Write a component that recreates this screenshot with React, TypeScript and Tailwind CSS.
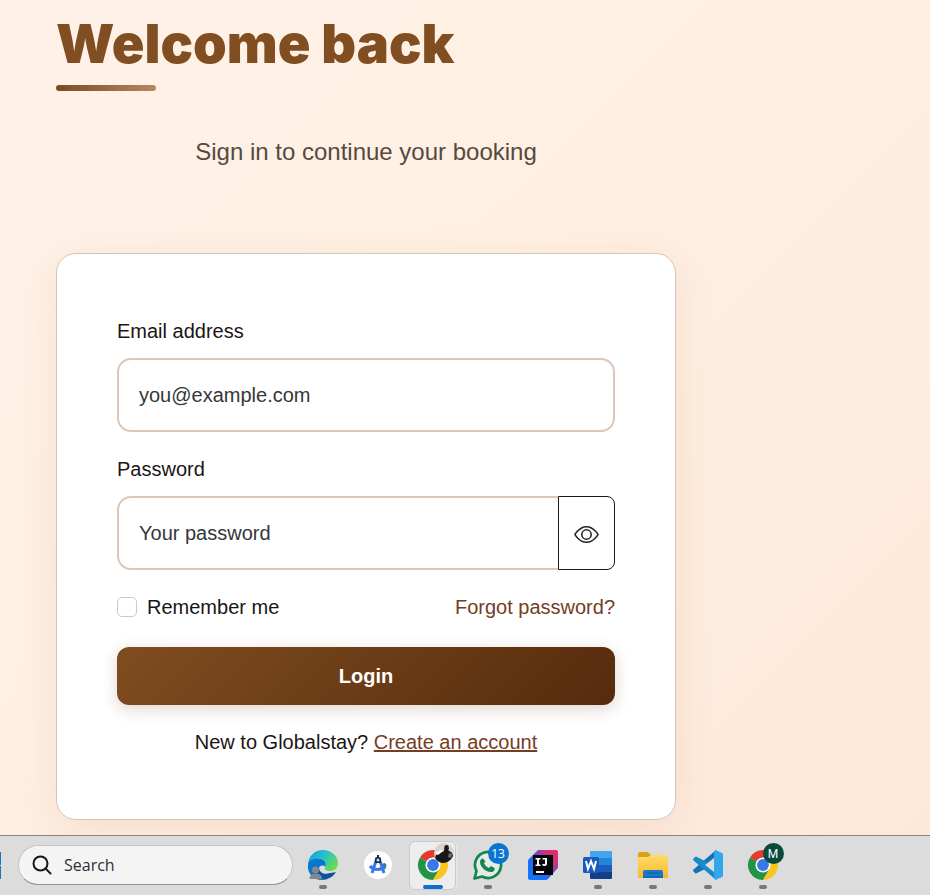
import { useState, type ReactNode } from "react";

function EyeIcon() {
  return (
    <svg viewBox="0 0 16 16" className="h-[25px] w-[25px]" fill="#212529" aria-hidden="true">
      <path d="M16 8s-3-5.500-8-5.500S0 8 0 8s3 5.500 8 5.500S16 8 16 8M1.173 8a13 13 0 0 1 1.660-2.043C4.120 4.668 5.880 3.500 8 3.500s3.879 1.168 5.168 2.457A13 13 0 0 1 14.828 8q-.086.130-.195.288c-.335.480-.830 1.120-1.465 1.755C11.879 11.332 10.119 12.500 8 12.500s-3.879-1.168-5.168-2.457A13 13 0 0 1 1.172 8z" />
      <path d="M8 5.500a2.500 2.500 0 1 0 0 5 2.500 2.500 0 0 0 0-5M4.500 8a3.500 3.500 0 1 1 7 0 3.500 3.500 0 0 1-7 0" />
    </svg>
  );
}

function EdgeIcon() {
  return (
    <svg viewBox="0 0 32 32" className="h-8 w-8" aria-hidden="true">
      <defs>
        <linearGradient id="edgeTop" x1="0" y1="0" x2="1" y2="0.6">
          <stop offset="0" stopColor="#1597dc" />
          <stop offset="0.5" stopColor="#27bfd0" />
          <stop offset="1" stopColor="#67dc55" />
        </linearGradient>
      </defs>
      <path d="M1 16C1 7 8 1 16 1s15 6 15 13c0 5-3.500 8-8 8-4 0-6-2-5-3 2-3-1-6-5-6C7 12 2 15 1 16z" fill="url(#edgeTop)" />
      <path d="M1 16c1-5 6-7 11-6 5 0 8 4 6 8-1-2-5-2-6 1-1 5 3 10 9 11C9 34 0 26 1 16z" fill="#0876cf" />
      <path d="M12 18c0 6 5 8 11 6 3 0 5-1 6-1-3 5-8 8-14 7-4-2-6-8-3-12z" fill="#124f9b" />
      <circle cx="8.500" cy="21" r="3.600" fill="#85888b" />
      <path d="M2.500 30c0-3 1.500-5 4-5h4.500c2.500 0 4 2 4 5z" fill="#85888b" />
    </svg>
  );
}

function AndroidStudioIcon() {
  return (
    <svg viewBox="0 0 30 30" className="h-[30px] w-[30px]" aria-hidden="true">
      <circle cx="15" cy="15" r="14" fill="#fff" />
      <path d="m18 14 4-1 1.500 2-1 4-3 1z" fill="#26885c" />
      <path d="M14 8 9 23M16 8l5 15M7 16c3 4 11 5 15 0" fill="none" stroke="#3978e8" strokeWidth="3" />
      <path d="M14 5h2v2l2 1v5h-6V8l2-1z" fill="#172d4b" />
      <circle cx="15" cy="10" r="1.500" fill="#bcdcff" />
    </svg>
  );
}

function ChromeIcon() {
  return (
    <svg viewBox="0 0 32 32" className="h-8 w-8" aria-hidden="true">
      <path d="M16 16 3 8.500A15 15 0 0 1 29 8.500H16z" fill="#e33b2e" />
      <path d="M16 16 3 8.500a15 15 0 0 0 13 22.500l6.500-11z" fill="#219447" />
      <path d="M16 16v-7.500h13A15 15 0 0 1 16 31l6.500-11z" fill="#fbc51b" />
      <circle cx="16" cy="16" r="7.600" fill="#fff" />
      <circle cx="16" cy="16" r="5.900" fill="#3979e6" />
    </svg>
  );
}

function ProfilePhoto() {
  return (
    <svg viewBox="0 0 20 20" className="h-5 w-5" aria-hidden="true">
      <circle cx="10" cy="10" r="10" fill="#d9d3cc" />
      <path d="M10.500 3q2.500-2 4 0l.5 3-1 1 4 3 1 3q-3 6-9 7-6 0-9-5l1-3 8-4z" fill="#17181a" />
      <path d="m1 10 6-3 2 1-5 4z" fill="#fff" />
      <path d="m15 10 3 1-1 4-3-1z" fill="#77736e" />
    </svg>
  );
}

function WhatsAppIcon() {
  return (
    <svg viewBox="0 0 32 32" className="h-8 w-8" aria-hidden="true">
      <path d="m2.500 29.500 2-7.500A13 13 0 1 1 10 27.500z" fill="#e7ebe8" stroke="#168451" strokeWidth="2.700" strokeLinejoin="round" />
      <path d="M11 9.500c-1-.5-3 1-3 3.500 0 5 6 10 11 10 3 0 4-2 3.500-4L19 17l-2 2c-2-.5-4.500-3-5-5l1.500-1.500z" fill="#168451" />
    </svg>
  );
}

function IntelliJIcon() {
  return (
    <svg viewBox="0 0 32 32" className="h-8 w-8" aria-hidden="true">
      <defs>
        <linearGradient id="ijEdge" x1="1" y1="0" x2="0" y2="1">
          <stop offset="0" stopColor="#ff235c" />
          <stop offset="0.3" stopColor="#b8358f" />
          <stop offset="0.55" stopColor="#2864ee" />
          <stop offset="1" stopColor="#087cff" />
        </linearGradient>
      </defs>
      <path d="M11 1h18q2 0 2 2v15q0 2-2 3L21 30q-1 1-3 1H3q-2 0-2-2V12q0-2 2-3z" fill="url(#ijEdge)" />
      <path d="M6 6h20v20H6z" fill="#050507" />
      <path d="M8.500 9h5v1.500h-1.500v5h1.500V17h-5v-1.500H10v-5H8.500zM15.500 9h4.500v6q0 2-2.500 2-1.500 0-2.500-1l1-1.200q2 1 2-.3v-4h-2.500zM9 22h8v2H9z" fill="#fff" />
    </svg>
  );
}

function WordIcon() {
  return (
    <svg viewBox="0 0 32 32" className="h-8 w-8" aria-hidden="true">
      <path d="M8 3q0-1 1-1h20q1 0 1 1v7H8z" fill="#43a5ed" />
      <path d="M8 9h22v7H8z" fill="#2785d7" />
      <path d="M8 16h22v7H8z" fill="#1c5ebb" />
      <path d="M8 23h22v6q0 1-1 1H9q-1 0-1-1z" fill="#143f86" />
      <rect x="1" y="8" width="16" height="16" rx="1.500" fill="#185abd" />
      <path d="m4 12 2 8 3-8 3 8 2-8" fill="none" stroke="#fff" strokeWidth="2" />
    </svg>
  );
}

function FolderIcon() {
  return (
    <svg viewBox="0 0 32 32" className="h-8 w-8" aria-hidden="true">
      <defs>
        <linearGradient id="folderFront" x1="0" y1="0" x2="0" y2="1">
          <stop offset="0" stopColor="#ffdc67" />
          <stop offset="1" stopColor="#f6b92b" />
        </linearGradient>
      </defs>
      <path d="M1 5q0-2 2-2h8l3 3h15v9H1z" fill="#dba219" />
      <path d="M1 8h10l3-2h15q2 0 2 2v21H1z" fill="url(#folderFront)" />
      <path d="M6 29v-6q0-2 2-2h16q2 0 2 2v6z" fill="#1878cb" />
      <path d="M10 24h12M6 28h20" fill="none" stroke="#0c5aa2" strokeWidth="1" />
    </svg>
  );
}

function VSCodeIcon() {
  return (
    <svg viewBox="0 0 32 32" className="h-8 w-8" aria-hidden="true">
      <path d="m1.500 20.500 22-19L31 5v6L5 24q-1 1-2 0l-1.500-1.500q-1-1 0-2z" fill="#0f75b8" />
      <path d="m1.500 11.500 22 19L31 27v-6L5 8Q4 7 3 8L1.500 9.500q-1 1 0 2z" fill="#168aca" />
      <path d="M22 9v14l-9-7z" fill="#dedede" />
      <path d="M22 4.500q0-2 1.500-3.500L30 4q1 .5 1 2v20q0 1.500-1 2l-6.500 3q-1.500-1-1.500-3z" fill="#31a8ee" />
    </svg>
  );
}

type TaskbarItem = {
  label: string;
  icon: ReactNode;
  badge?: ReactNode;
  active?: boolean;
  running?: boolean;
};

const taskbarItems: TaskbarItem[] = [
  { label: "Microsoft Edge", icon: <EdgeIcon />, running: true },
  { label: "Android Studio", icon: <AndroidStudioIcon /> },
  {
    label: "Google Chrome",
    icon: <ChromeIcon />,
    active: true,
    badge: <span className="absolute -top-[6px] left-[17px]"><ProfilePhoto /></span>,
  },
  {
    label: "WhatsApp",
    icon: <WhatsAppIcon />,
    running: true,
    badge: (
      <span className="absolute -top-[6px] left-4 flex h-[21px] w-[21px] items-center justify-center rounded-full bg-[#0875d1] font-['Open_Sans',sans-serif] text-xs text-white">
        13
      </span>
    ),
  },
  { label: "IntelliJ IDEA", icon: <IntelliJIcon /> },
  { label: "Word", icon: <WordIcon />, running: true },
  { label: "File Explorer", icon: <FolderIcon />, running: true },
  { label: "Visual Studio Code", icon: <VSCodeIcon />, running: true },
  {
    label: "Google Chrome, profile M",
    icon: <ChromeIcon />,
    running: true,
    badge: (
      <span className="absolute -top-[6px] left-4 flex h-[21px] w-[21px] items-center justify-center rounded-full bg-[#064b3e] font-[Roboto,sans-serif] text-xs text-white">
        M
      </span>
    ),
  },
];

function Taskbar() {
  return (
    <footer className="flex h-[60px] items-center overflow-hidden border-t border-[#8d817c] bg-[#dcdcdc] pb-px">
      <div className="mr-[17px] flex w-px shrink-0 flex-col gap-px">
        <span className="h-[13px] bg-[#1677bb]" />
        <span className="h-[13px] bg-[#1677bb]" />
      </div>
      <div className="flex h-10 w-[275px] shrink-0 items-center gap-3 rounded-full border border-[#c5c5c5] border-b-[#929292] bg-[#f4f4f4] px-[13px]">
        <svg viewBox="0 0 20 20" className="h-5 w-5 shrink-0" fill="none" stroke="#16181b" strokeWidth="2" aria-hidden="true">
          <circle cx="8.500" cy="8.500" r="7" />
          <path d="m13.500 13.500 5 5" strokeLinecap="round" />
        </svg>
        <input
          type="search"
          aria-label="Search"
          placeholder="Search"
          className="min-w-0 flex-1 bg-transparent font-['Open_Sans',sans-serif] text-base text-[#222] outline-none placeholder:text-[#303030]"
        />
      </div>
      <nav aria-label="Open apps" className="ml-[2px] flex h-full">
        {taskbarItems.map((item) => (
          <button key={item.label} type="button" aria-label={item.label} className="h-full w-[55px] shrink-0 px-1 pt-[5px] pb-1">
            <span
              className={`flex h-[49px] flex-col items-center justify-between rounded-md border pt-[7px] ${
                item.active ? "border-[#c9c9c9] bg-[#ededed] shadow-[2px_0_0_#e4e4e4]" : "border-transparent"
              }`}
            >
              <span className="relative flex h-8 w-8 items-center justify-center">
                {item.icon}
                {item.badge}
              </span>
              {item.active && <span className="h-1 w-5 rounded-full bg-[#0873ce]" />}
              {item.running && <span className="h-1 w-2 rounded-full bg-[#777]" />}
            </span>
          </button>
        ))}
      </nav>
    </footer>
  );
}

export default function LoginPage() {
  const [showPassword, setShowPassword] = useState(false);

  return (
    <div className="flex min-h-screen flex-col font-['Liberation_Sans',Arial,sans-serif] text-xl leading-8 text-[#1b1514]">
      <main className="flex-1 bg-[linear-gradient(135deg,#fff1e8,#fff0e3_35%,#fde9da)] px-14 pt-3 pb-[15px]">
        <div className="w-full max-w-[620px]">
          <h1 className="font-[Inter,sans-serif] text-[54px] leading-[64px] font-black whitespace-nowrap text-[#804e20]">
            Welcome back
          </h1>
          <div className="mt-[9px] h-[6px] w-[100px] rounded-full bg-linear-to-r from-[#7b4a20] to-[#b48a60]" />
          <p className="mt-[43px] text-center text-2xl leading-9 text-[#554a41]">
            Sign in to continue your booking
          </p>

          <form
            onSubmit={(event) => event.preventDefault()}
            className="mt-[83px] rounded-[20px] border border-[#d6c5b9] bg-white px-[60px] py-[61px] shadow-[0_10px_40px_rgba(128,78,32,0.09)]"
          >
            <label htmlFor="email" className="block">Email address</label>
            <input
              id="email"
              type="email"
              placeholder="you@example.com"
              className="mt-[11px] block h-[74px] w-full rounded-[14px] border-2 border-[#dec6b8] bg-white px-5 outline-none placeholder:text-[#34373a]"
            />

            <label htmlFor="password" className="mt-[21px] block">Password</label>
            <div className="mt-[11px] flex h-[74px]">
              <input
                id="password"
                type={showPassword ? "text" : "password"}
                placeholder="Your password"
                className="min-w-0 flex-1 rounded-l-[14px] border-2 border-r-0 border-[#dec6b8] bg-white px-5 outline-none placeholder:text-[#34373a]"
              />
              <button
                type="button"
                aria-label={showPassword ? "Hide password" : "Show password"}
                onClick={() => setShowPassword(!showPassword)}
                className="flex w-[57px] shrink-0 items-center justify-center rounded-r-lg border border-[#171a1d] pt-[2px]"
              >
                <EyeIcon />
              </button>
            </div>

            <div className="mt-[21px] flex items-center justify-between">
              <label className="flex items-center gap-[10px]">
                <input
                  type="checkbox"
                  className="h-5 w-5 appearance-none rounded-[5px] border border-[#c9c9cc] bg-white checked:bg-[#804e20]"
                />
                Remember me
              </label>
              <a href="#" className="text-[#743d24]">Forgot password?</a>
            </div>

            <button
              type="submit"
              className="mt-6 h-[58px] w-full rounded-xl bg-[linear-gradient(135deg,#804d20,#562b0c)] font-bold text-white shadow-[0_4px_16px_rgba(90,45,12,0.2)]"
            >
              Login
            </button>

            <p className="mt-[21px] text-center">
              New to Globalstay?{" "}
              <a href="#" className="text-[#743d24] underline">Create an account</a>
            </p>
          </form>
        </div>
      </main>
      <Taskbar />
    </div>
  );
}
